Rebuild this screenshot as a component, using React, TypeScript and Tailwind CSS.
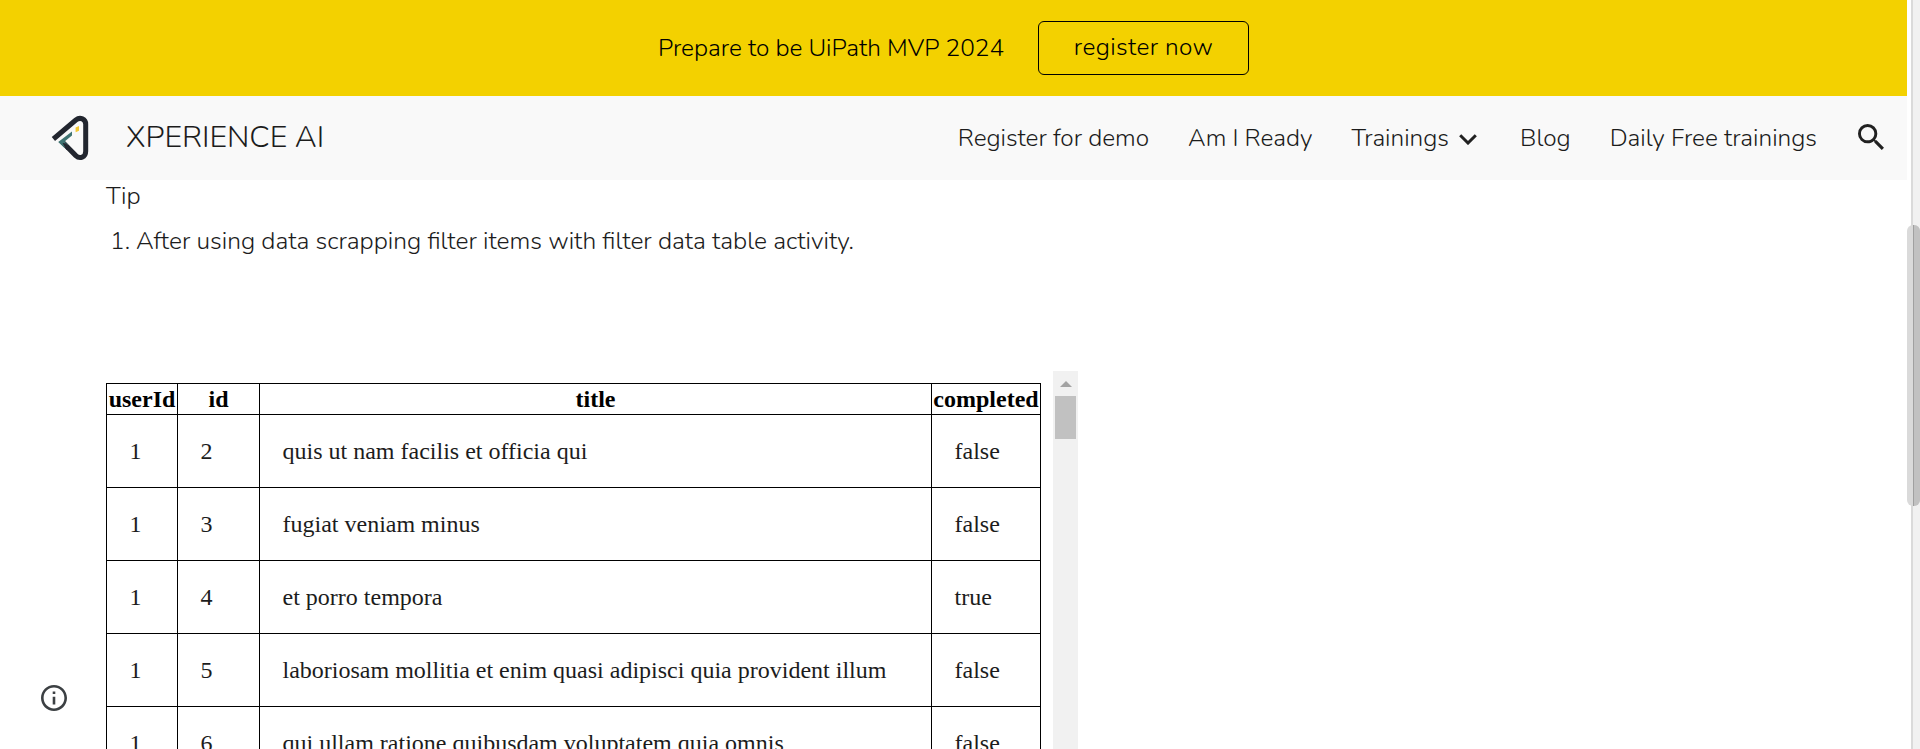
const rows = [
  { userId: 1, id: 2, title: "quis ut nam facilis et officia qui", completed: "false" },
  { userId: 1, id: 3, title: "fugiat veniam minus", completed: "false" },
  { userId: 1, id: 4, title: "et porro tempora", completed: "true" },
  { userId: 1, id: 5, title: "laboriosam mollitia et enim quasi adipisci quia provident illum", completed: "false" },
  { userId: 1, id: 6, title: "qui ullam ratione quibusdam voluptatem quia omnis", completed: "false" },
];

function Logo() {
  return (
    <svg className="h-[50px] w-[40px] shrink-0" viewBox="0 0 40 50" fill="none">
      <path
        d="M4.4 26 L26.8 7 C31.2 3.6 36.7 6 36.7 11.2 V38.2 C36.7 44.4 30.6 46.2 26.8 42.6 L13.2 28.8"
        stroke="#22262f"
        strokeWidth="5"
      />
      <path d="M9.2 29 L23 18.6 V22.6 L15.6 28.6 L19 32 L15.5 35 Z" fill="#3f7473" />
      <path d="M13.6 30 L17 30.6 L20.4 34 L17.4 37 Z" fill="#22262f" />
      <path d="M26.6 14.4 L30 13 V17.8 L26.6 19.2 Z" fill="#f3c833" />
    </svg>
  );
}

export default function App() {
  return (
    <div className="flex h-[749px] w-full overflow-hidden bg-white font-['Nunito','Open_Sans',sans-serif] text-[24.4px] leading-8 font-[330] text-[#1c1c1c]">
      <div className="flex min-w-0 flex-1 flex-col">
        <div className="flex h-24 shrink-0 items-center justify-center bg-[#f3d100] text-black">
          <span className="mr-[34px] whitespace-nowrap">Prepare to be UiPath MVP 2024</span>
          <button className="h-[54px] w-[211px] rounded-md border border-black pb-[2px] tracking-[0.4px]">
            register now
          </button>
        </div>

        <header className="flex h-[84px] shrink-0 items-center bg-[#f9f9f9] pr-[23px] pl-[49px]">
          <Logo />
          <span className="mb-[2px] ml-[37px] text-[30.4px] whitespace-nowrap">XPERIENCE AI</span>
          <nav className="ml-auto flex items-center gap-[39px] whitespace-nowrap">
            <span>Register for demo</span>
            <span>Am I Ready</span>
            <span className="mr-1 flex items-center gap-[10px]">
              Trainings
              <svg className="mt-[3px] h-[11px] w-[18px]" viewBox="0 0 18 11" fill="none">
                <path d="M1.2 1.2 L9 9 L16.8 1.2" stroke="#212121" strokeWidth="3" />
              </svg>
            </span>
            <span>Blog</span>
            <span>Daily Free trainings</span>
          </nav>
          <svg className="mb-[2px] ml-[41px] h-[26px] w-[26px]" viewBox="3 3 17.5 17.5" fill="#212121">
            <path d="M15.5 14h-.79l-.28-.27A6.471 6.471 0 0 0 16 9.5 6.5 6.5 0 1 0 9.5 16c1.61 0 3.09-.59 4.23-1.57l.27.28v.79l5 4.99L20.49 19l-4.99-5zm-6 0C7.01 14 5 11.99 5 9.5S7.01 5 9.5 5 14 7.01 14 9.5 11.99 14 9.5 14z" />
          </svg>
        </header>

        <main className="flex min-h-0 flex-1">
          <div className="flex w-[106px] shrink-0 items-end pb-[38px] pl-[41px]">
            <svg className="h-[26px] w-[26px]" viewBox="2 2 20 20" fill="#3c4043">
              <path d="M11 7h2v2h-2zm0 4h2v6h-2zm1-9C6.48 2 2 6.48 2 12s4.48 10 10 10 10-4.48 10-10S17.52 2 12 2zm0 18c-4.41 0-8-3.59-8-8s3.59-8 8-8 8 3.59 8 8-3.59 8-8 8z" />
            </svg>
          </div>
          <div className="flex flex-col">
            <p className="h-8 text-[24.6px]">Tip</p>
            <div className="mt-[13px] flex h-8 text-[24.55px] whitespace-nowrap">
              <span className="w-[30px] pl-[4px]">1.</span>
              <span>After using data scrapping filter items with filter data table activity.</span>
            </div>

            <div className="mt-[114px] flex min-h-0 flex-1 font-['Liberation_Serif',serif] text-2xl font-normal text-[#1c1c1c]">
              <div className="w-[947px] overflow-hidden pt-3">
                <table className="w-[935px] table-fixed border-collapse leading-7">
                  <colgroup>
                    <col className="w-[71px]" />
                    <col className="w-[82px]" />
                    <col className="w-[672px]" />
                    <col className="w-[109px]" />
                  </colgroup>
                  <thead>
                    <tr className="h-[31px] font-bold text-black">
                      <th className="border border-black p-0">userId</th>
                      <th className="border border-black p-0">id</th>
                      <th className="border border-black p-0">title</th>
                      <th className="border border-black p-0">completed</th>
                    </tr>
                  </thead>
                  <tbody>
                    {rows.map((row) => (
                      <tr key={row.id} className="h-[73px]">
                        <td className="border border-black px-[22.5px] py-0">{row.userId}</td>
                        <td className="border border-black px-[22.5px] py-0">{row.id}</td>
                        <td className="border border-black px-[22.5px] py-0 whitespace-nowrap">{row.title}</td>
                        <td className="border border-black px-[22.5px] py-0">{row.completed}</td>
                      </tr>
                    ))}
                  </tbody>
                </table>
              </div>
              <div className="flex w-[25px] flex-col items-center bg-[#f1f1f1]">
                <svg className="mt-[10px] h-[6px] w-3" viewBox="0 0 12 6">
                  <path d="M0 6 L6 0 L12 6 Z" fill="#a3a3a3" />
                </svg>
                <div className="mt-[9px] h-[43px] w-[21px] bg-[#c1c1c1]" />
              </div>
            </div>
          </div>
        </main>
      </div>

      <div className="relative w-[13px] shrink-0 bg-white">
        <div className="ml-[4px] h-full w-[9px] border-l-2 border-[#dadada] bg-[#f1f1f1]" />
        <div className="absolute top-[225px] left-0 flex h-[281px] w-[13px] overflow-hidden rounded-md bg-[#dadada]">
          <div className="ml-[6px] w-[7px] border-l border-[#a0a0a0] bg-[#c1c1c1]" />
        </div>
      </div>
    </div>
  );
}
